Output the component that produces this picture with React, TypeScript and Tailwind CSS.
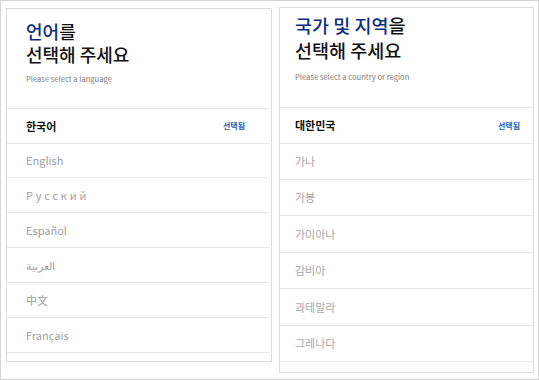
import React from 'react';

const font = "font-['Noto_Sans_CJK_KR','Noto_Sans',sans-serif]";

const languages: { label: string; className?: string }[] = [
  { label: 'English' },
  { label: 'Русский', className: 'tracking-[2.8px]' },
  { label: 'Español' },
  { label: 'العربية', className: 'text-[9px]' },
  { label: '中文' },
  { label: 'Français' },
];

const countries = ['가나', '가봉', '가이아나', '감비아', '과테말라', '그레나다'];

// row heights (border included) so the separators land where the screenshot has them
const leftRowHeights = ['h-[35px]', 'h-[34px]', 'h-[35px]', 'h-[35px]', 'h-[35px]', 'h-[35px]', 'h-[35px]'];
const rightRowHeights = ['h-[36px]', 'h-[36px]', 'h-[36px]', 'h-[37px]', 'h-[36px]', 'h-[37px]', 'h-[36px]'];

export default function App() {
  return (
    <div className={`${font} w-[539px] h-[380px] bg-white border border-[#d4d4d4] flex items-start pl-[5px] overflow-hidden`}>
      {/* Language card */}
      <div className="mt-[7px] w-[266px] h-[354px] border border-[#dcdcdc] overflow-hidden">
        <div className="pr-[2px]">
          <div className="h-[100px] border-b border-[#e6e6e6] pl-[19px] pt-[11px]">
            <h1 className="text-[18px] leading-[23px] text-[#111] font-medium">
              <span className="text-[#0c2f7e]">언어</span>를
              <br />
              선택해 주세요
            </h1>
            <p className="mt-[7px] text-[7.6px] leading-[12px] text-[#7e7e7e]">Please select a language</p>
          </div>
          <ul>
            <li className={`${leftRowHeights[0]} border-b border-[#e6e6e6] flex items-center justify-between pl-[19px] pr-[24px]`}>
              <span className="text-[11px] font-bold text-[#111]">한국어</span>
              <span className="text-[8px] font-bold text-[#1f63b3]">선택됨</span>
            </li>
            {languages.map((lang, i) => (
              <li
                key={lang.label}
                className={`${leftRowHeights[i + 1]} border-b border-[#e6e6e6] flex items-center pl-[19px]`}
              >
                <span className={`text-[11px] text-[#a0a0a0] ${lang.className ?? ''}`}>{lang.label}</span>
              </li>
            ))}
          </ul>
        </div>
      </div>

      {/* Country card */}
      <div className="ml-[7px] mt-[6px] w-[255px] h-[366px] border border-[#dcdcdc] overflow-hidden">
        <div className="h-[100px] border-b border-[#e6e6e6] pl-[15px] pt-[5px]">
          <h1 className="text-[18.5px] leading-[25px] text-[#111] font-medium">
            <span className="text-[#0c2f7e]">국가 및 지역</span>을
            <br />
            선택해 주세요
          </h1>
          <p className="mt-[8px] text-[7.6px] leading-[12px] text-[#7e7e7e]">Please select a country or region</p>
        </div>
        <ul>
          <li className={`${rightRowHeights[0]} border-b border-[#e6e6e6] flex items-center justify-between pl-[15px] pr-[13px]`}>
            <span className="text-[11px] font-bold text-[#111]">대한민국</span>
            <span className="text-[8px] font-bold text-[#1f63b3]">선택됨</span>
          </li>
          {countries.map((name, i) => (
            <li
              key={name}
              className={`${rightRowHeights[i + 1]} border-b border-[#e6e6e6] flex items-center pl-[15px]`}
            >
              <span className="text-[11px] text-[#a6a6a6]">{name}</span>
            </li>
          ))}
        </ul>
      </div>
    </div>
  );
}
